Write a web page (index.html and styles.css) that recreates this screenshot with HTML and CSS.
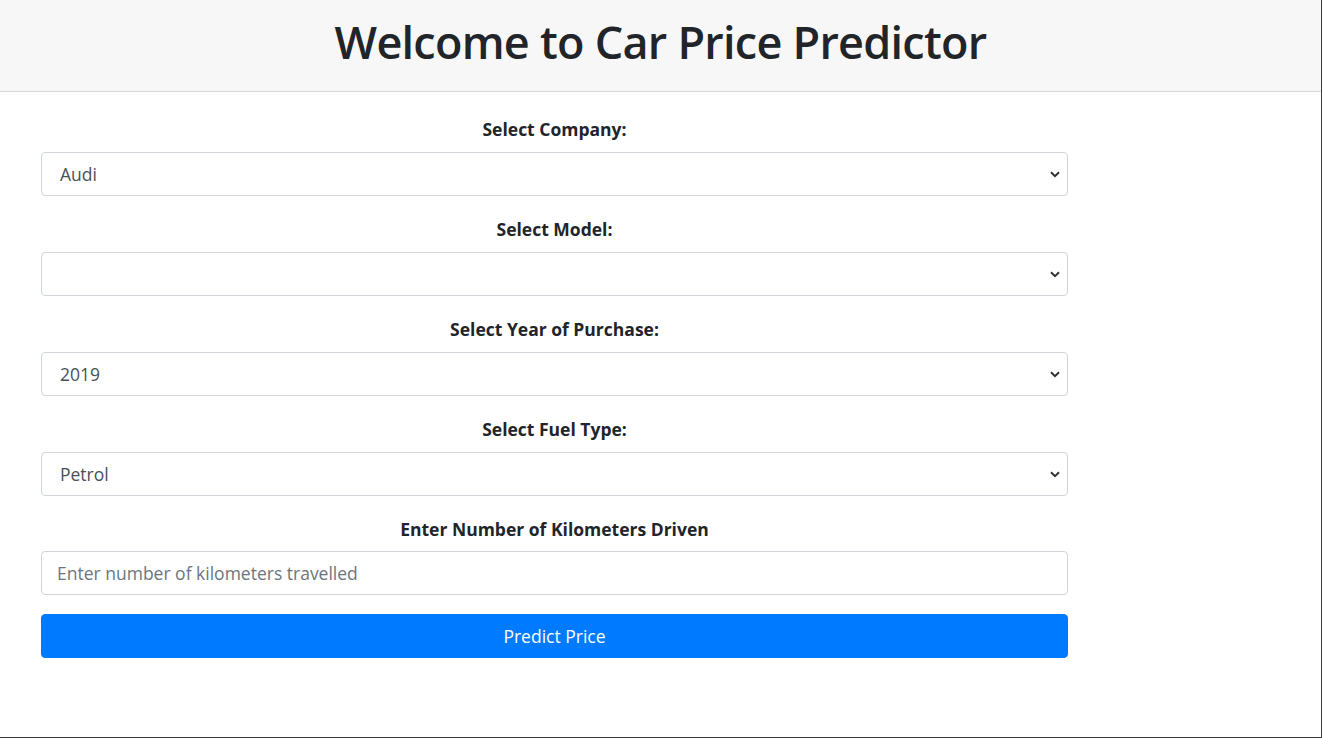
FILE: index.html
```html
<!DOCTYPE html>
<html>
<head>
<meta charset="utf-8">
<link rel="stylesheet" href="styles.css">
</head>
<body>
<div class="frame">
  <header class="hero">
    <h1 class="title">Welcome to Car Price Predictor</h1>
  </header>
  <main class="content">
    <form class="form">
      <div class="group">
        <label class="label">Select Company:</label>
        <select class="control select"><option>Audi</option></select>
      </div>
      <div class="group">
        <label class="label">Select Model:</label>
        <select class="control select"><option></option></select>
      </div>
      <div class="group">
        <label class="label">Select Year of Purchase:</label>
        <select class="control select"><option>2019</option></select>
      </div>
      <div class="group">
        <label class="label">Select Fuel Type:</label>
        <select class="control select"><option>Petrol</option></select>
      </div>
      <div class="group group-last">
        <label class="label">Enter Number of Kilometers Driven</label>
        <input class="control input" type="text" placeholder="Enter number of kilometers travelled">
      </div>
      <button class="btn" type="button">Predict Price</button>
    </form>
  </main>
</div>
</body>
</html>
```
FILE: styles.css
```css
* { box-sizing: border-box; }
html, body { margin: 0; padding: 0; background: #fff; }
body { font-family: "Open Sans", "Noto Sans", sans-serif; color: #212529; }
.frame {
  width: 1322px;
  height: 738px;
  border-right: 1px solid #3a3a3a;
  border-bottom: 1px solid #3a3a3a;
  overflow: hidden;
}
.hero {
  height: 92px;
  background: #f7f7f7;
  border-bottom: 1px solid #d9d9d9;
  display: flex;
  align-items: center;
  justify-content: center;
  padding-bottom: 8px;
}
.title {
  margin: 0;
  font-size: 45px;
  font-weight: 600;
  letter-spacing: -0.75px;
  line-height: 1.2;
  color: #212529;
}
.content { padding: 25px 0 0 41px; }
.form { width: 1027px; display: flex; flex-direction: column; }
.group { display: flex; flex-direction: column; margin-bottom: 21px; }
.group-last { margin-bottom: 20px; }
.label {
  text-align: center;
  font-weight: 700;
  font-size: 17.5px;
  line-height: 25px;
  margin-bottom: 10px;
}
.group-last .label { margin-bottom: 9px; }
.control {
  width: 100%;
  height: 44px;
  border: 1px solid #ced4da;
  border-radius: 4px;
  background-color: #fff;
  font-family: inherit;
  font-size: 17.5px;
  color: #495057;
  padding: 0 18px;
  outline: none;
}
.select {
  appearance: none;
  -webkit-appearance: none;
  background-image: url("data:image/svg+xml;utf8,<svg xmlns='http://www.w3.org/2000/svg' width='10' height='7' viewBox='0 0 10 7'><path d='M1 1.2 L5 5.2 L9 1.2' fill='none' stroke='%23333' stroke-width='2'/></svg>");
  background-repeat: no-repeat;
  background-position: right 7px center;
  background-size: 10px 7px;
}
.input { padding: 0 15px; }
.input::placeholder { color: #6c757d; }
.btn {
  height: 44px;
  width: 100%;
  margin-top: -1px;
  background: #007bff;
  border: 1px solid #007bff;
  border-radius: 4px;
  color: #fff;
  font-family: inherit;
  font-size: 17.5px;
}
```
